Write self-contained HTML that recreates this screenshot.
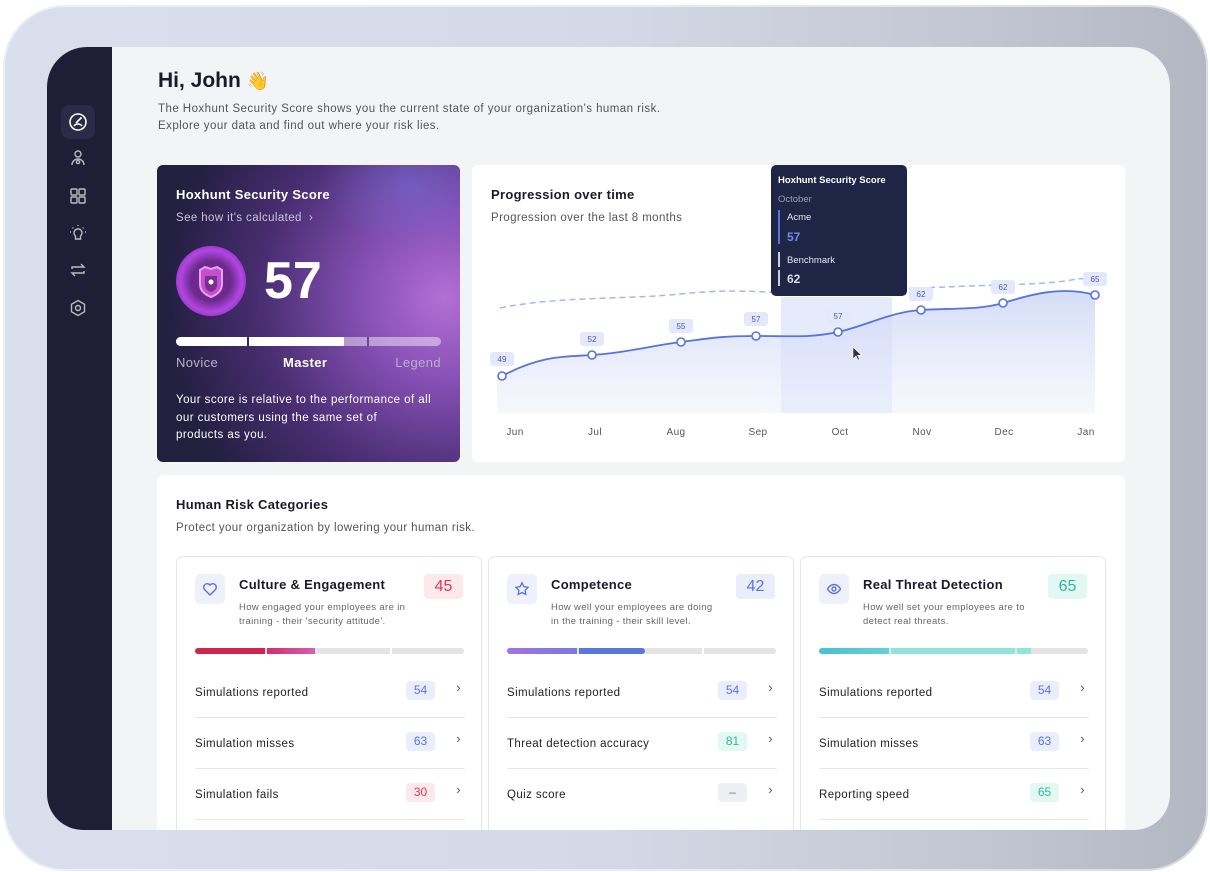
<!DOCTYPE html>
<html><head><meta charset="utf-8"><style>
*{box-sizing:border-box;margin:0;padding:0}
body{width:1210px;height:872px;background:#fff;position:relative;overflow:hidden;font-family:"Liberation Sans",sans-serif;color:#1a1a2b}
.frame{position:absolute;left:3px;top:5px;width:1205px;height:866px;border-radius:62px;background:linear-gradient(90deg,#d9dfec 0%,#d3d9e7 50%,#c3c7d1 80%,#b3b7c2 100%);box-shadow:inset 0 0 0 2px rgba(255,255,255,.5)}
.screen{position:absolute;left:47px;top:47px;width:1123px;height:783px;border-radius:40px 40px 36px 36px;background:#f3f4f6;overflow:hidden}
.side{position:absolute;left:0;top:0;width:65px;height:783px;background:#1f1e36}
.ic{position:absolute;left:14px;width:34px;height:34px;border-radius:8px;display:flex;align-items:center;justify-content:center}
.main{position:absolute;left:65px;top:0;right:0;bottom:0}
h1{position:absolute;left:46px;top:22px;font-size:21px;font-weight:bold}
.intro{position:absolute;left:46px;top:54px;font-size:11.5px;line-height:17px;color:#555;letter-spacing:.45px}
.card{position:absolute;background:#fff;border-radius:6px}
.score{left:45px;top:118px;width:303px;height:297px;border-radius:6px;background:radial-gradient(circle at 95% 45%,#b36fd4 0%,#8650b5 25%,#4a2e73 55%,#221f3f 85%);color:#fff;overflow:hidden}
.score:after{content:"";position:absolute;right:-40px;top:-40px;width:180px;height:120px;background:radial-gradient(ellipse,rgba(120,120,230,.45),transparent 70%)}
.t{font-weight:bold;font-size:13px;letter-spacing:.3px}
.sub{font-size:11.5px;color:#555;letter-spacing:.4px}
.pill{display:inline-block;border-radius:4px;text-align:center}
.sc{position:absolute;top:0;width:306px;height:300px;border:1px solid #e3e5ea;border-radius:7px;background:#fff}
.row{position:absolute;left:18px;width:270px;height:51px;border-bottom:1px solid #e6e7eb;font-size:11.5px;color:#222;letter-spacing:.4px}
.row span.l{position:absolute;left:0;top:20px}
.row .v{position:absolute;right:30px;top:14px;width:29px;height:19px;font-size:12px;line-height:19px;border-radius:4px;text-align:center;letter-spacing:0}
.row .a{position:absolute;right:4px;top:13px;font-size:13px;color:#555}
.desc{position:absolute;left:62px;top:44px;font-size:9.5px;line-height:14px;color:#666;letter-spacing:.35px}
</style></head><body>
<div class="frame"></div>
<div class="screen">
 <div class="side">
  <div class="ic" style="top:58px;background:#2b2a47"><svg width="20" height="20" viewBox="0 0 20 20" fill="none" stroke="#fff" stroke-width="1.6"><circle cx="10" cy="10" r="8"/><path d="M6 14a5 5 0 0 1 8 0M8 11l5-5M12 6h1v1"/></svg></div>
  <div class="ic" style="top:94px"><svg width="18" height="18" viewBox="0 0 18 18" fill="none" stroke="#bbb" stroke-width="1.4"><circle cx="9" cy="5" r="3"/><path d="M3 16a6 6 0 0 1 12 0"/><circle cx="9" cy="13" r="1.6"/></svg></div>
  <div class="ic" style="top:132px"><svg width="18" height="18" viewBox="0 0 18 18" fill="none" stroke="#bbb" stroke-width="1.4"><rect x="2" y="2" width="6" height="6" rx="1"/><rect x="10" y="2" width="6" height="6" rx="1"/><rect x="2" y="10" width="6" height="6" rx="1"/><rect x="10" y="10" width="6" height="6" rx="1"/></svg></div>
  <div class="ic" style="top:169px"><svg width="18" height="18" viewBox="0 0 18 18" fill="none" stroke="#bbb" stroke-width="1.4"><path d="M6.5 12a4 4 0 1 1 5 0v3h-5z M9 1v1M2 8H1M17 8h-1M3.5 3.5l.7.7M14.5 3.5l-.7.7"/></svg></div>
  <div class="ic" style="top:206px"><svg width="18" height="18" viewBox="0 0 18 18" fill="none" stroke="#bbb" stroke-width="1.4"><path d="M3 8V6h12l-3-3M15 10v2H3l3 3"/></svg></div>
  <div class="ic" style="top:244px"><svg width="18" height="18" viewBox="0 0 18 18" fill="none" stroke="#bbb" stroke-width="1.4"><path d="M9 1.5l6.5 3.75v7.5L9 16.5l-6.5-3.75v-7.5z"/><circle cx="9" cy="9" r="2.5"/></svg></div>
 </div>
 <div class="main">
  <h1>Hi, John <span style="font-size:18px">👋</span></h1>
  <div class="intro">The Hoxhunt Security Score shows you the current state of your organization's human risk.<br>Explore your data and find out where your risk lies.</div>

  <div class="card score">
   <div class="t" style="position:absolute;left:19px;top:22px;z-index:1">Hoxhunt Security Score</div>
   <div style="position:absolute;left:19px;top:47px;font-size:11.5px;color:#c9c4dc;z-index:1;letter-spacing:.4px">See how it's calculated &nbsp;›</div>
   <div style="position:absolute;left:19px;top:81px;width:70px;height:70px;border-radius:50%;background:radial-gradient(circle,#6b2a8c 40%,#b146e0 62%,#8d2fc0 80%);z-index:1"><svg width="70" height="70" viewBox="0 0 70 70"><path d="M24 24l5-3 6 2 6-2 5 3v14c0 7-6 11-11 13-5-2-11-6-11-13z" fill="#c54fcf" stroke="#e7a0ff" stroke-width="2"/><path d="M29 30h12v9c0 4-3 6-6 7-3-1-6-3-6-7z" fill="#7a2f8f"/><circle cx="35" cy="36" r="2.5" fill="#fff"/></svg></div>
   <div style="position:absolute;left:107px;top:86px;font-size:52px;font-weight:bold;z-index:1">57</div>
   <div style="position:absolute;left:19px;top:172px;width:265px;height:9px;border-radius:5px;background:rgba(255,255,255,.45);z-index:1"><div style="width:168px;height:9px;border-radius:5px 0 0 5px;background:#fff"></div><div style="position:absolute;left:71px;top:0;width:2px;height:9px;background:#3a2b58"></div><div style="position:absolute;left:191px;top:0;width:2px;height:9px;background:#6a4a8c"></div></div>
   <div style="position:absolute;left:19px;top:190px;width:265px;font-size:13px;z-index:1;color:#b7b2c9;letter-spacing:.4px"><span>Novice</span><span style="position:absolute;left:107px;color:#fff;font-weight:bold">Master</span><span style="position:absolute;right:0">Legend</span></div>
   <div style="position:absolute;left:19px;top:227px;width:280px;font-size:11.5px;line-height:17.5px;z-index:1;letter-spacing:.45px;white-space:nowrap">Your score is relative to the performance of all<br>our customers using the same set of<br>products as you.</div>
  </div>

  <div class="card" style="left:360px;top:118px;width:653px;height:297px">
   <div class="t" style="position:absolute;left:19px;top:22px">Progression over time</div>
   <div class="sub" style="position:absolute;left:19px;top:47px">Progression over the last 8 months</div>
  </div>
  <svg style="position:absolute;left:0;top:0" width="1058" height="420" viewBox="112 47 1058 420">
   <defs><linearGradient id="g" x1="0" y1="0" x2="0" y2="1"><stop offset="0" stop-color="#c9d3f5" stop-opacity=".8"/><stop offset="1" stop-color="#eef1fc" stop-opacity=".5"/></linearGradient></defs>
   <rect x="781" y="297" width="111" height="116" fill="#e6ebfb"/>
   <path d="M502 376C540 356 560 357 592 355S650 346 681 342 720 336 756 336 810 338 838 332 890 312 921 310 980 310 1003 303 1060 285 1095 295V413H497V376Z" fill="url(#g)"/>
   <path d="M500 308C560 296 620 300 680 294S760 293 800 293 900 288 1000 285 1060 276 1095 280" fill="none" stroke="#a9b6e8" stroke-width="1.5" stroke-dasharray="6 4"/>
   <path d="M502 376C540 356 560 357 592 355S650 346 681 342 720 336 756 336 810 338 838 332 890 312 921 310 980 310 1003 303 1060 285 1095 295" fill="none" stroke="#5774dc" stroke-width="1.8"/>
   <g fill="#fff" stroke="#5774dc" stroke-width="1.6">
    <circle cx="502" cy="376" r="4"/><circle cx="592" cy="355" r="4"/><circle cx="681" cy="342" r="4"/><circle cx="756" cy="336" r="4"/><circle cx="838" cy="332" r="4"/><circle cx="921" cy="310" r="4"/><circle cx="1003" cy="303" r="4"/><circle cx="1095" cy="295" r="4"/>
   </g>
   <g font-family="Liberation Sans" font-size="8" fill="#4a5aa8" text-anchor="middle">
    <rect x="490" y="352" width="24" height="14" rx="3" fill="#e3e8fa"/><text x="502" y="362">49</text>
    <rect x="580" y="332" width="24" height="14" rx="3" fill="#e3e8fa"/><text x="592" y="342">52</text>
    <rect x="669" y="319" width="24" height="14" rx="3" fill="#e3e8fa"/><text x="681" y="329">55</text>
    <rect x="744" y="312" width="24" height="14" rx="3" fill="#e3e8fa"/><text x="756" y="322">57</text>
    <rect x="826" y="309" width="24" height="14" rx="3" fill="#e3e8fa"/><text x="838" y="319">57</text>
    <rect x="909" y="287" width="24" height="14" rx="3" fill="#e3e8fa"/><text x="921" y="297">62</text>
    <rect x="991" y="280" width="24" height="14" rx="3" fill="#e3e8fa"/><text x="1003" y="290">62</text>
    <rect x="1083" y="272" width="24" height="14" rx="3" fill="#e3e8fa"/><text x="1095" y="282">65</text>
   </g>
   <g font-family="Liberation Sans" font-size="10" fill="#555" text-anchor="middle" letter-spacing=".4">
    <text x="515" y="435">Jun</text><text x="595" y="435">Jul</text><text x="676" y="435">Aug</text><text x="758" y="435">Sep</text><text x="840" y="435">Oct</text><text x="922" y="435">Nov</text><text x="1004" y="435">Dec</text><text x="1086" y="435">Jan</text>
   </g>
   <path d="M853 347l0 12 3-3 2 4 1.5-.7-2-4 4 0z" fill="#333" stroke="#fff" stroke-width=".6"/>
   <rect x="771" y="165" width="136" height="131" rx="5" fill="#1f2544"/>
   <g font-family="Liberation Sans">
    <text x="778" y="183" font-size="9.5" font-weight="bold" fill="#fff">Hoxhunt Security Score</text>
    <text x="778" y="202" font-size="9.5" fill="#9aa0b8">October</text>
    <rect x="778" y="210" width="2" height="34" fill="#5774dc"/>
    <text x="787" y="220" font-size="9.5" fill="#e6e8f0">Acme</text>
    <text x="787" y="241" font-size="12" font-weight="bold" fill="#6f8cf0">57</text>
    <rect x="778" y="252" width="2" height="15" fill="#c9cde6"/><rect x="778" y="270" width="2" height="16" fill="#c9cde6"/>
    <text x="787" y="263" font-size="9.5" fill="#e6e8f0">Benchmark</text>
    <text x="787" y="283" font-size="12" font-weight="bold" fill="#d9dcf0">62</text>
   </g>
  </svg>

  <div class="card" style="left:45px;top:428px;width:968px;height:400px">
   <div class="t" style="position:absolute;left:19px;top:22px">Human Risk Categories</div>
   <div class="sub" style="position:absolute;left:19px;top:47px">Protect your organization by lowering your human risk.</div>
   <div class="sc" style="left:19px;top:81px">
    <div style="position:absolute;left:18px;top:17px;width:30px;height:30px;border-radius:5px;background:#eef1fc;display:flex;align-items:center;justify-content:center"><svg width="16" height="16" viewBox="0 0 16 16" fill="none" stroke="#5774dc" stroke-width="1.4"><path d="M8 14L2.5 8.5A3.2 3.2 0 0 1 8 4a3.2 3.2 0 0 1 5.5 4.5z"/></svg></div>
    <div class="t" style="position:absolute;left:62px;top:20px">Culture &amp; Engagement</div>
    <div class="desc">How engaged your employees are in<br>training - their 'security attitude'.</div>
    <div class="pill" style="position:absolute;left:247px;top:17px;width:39px;height:25px;background:#fde8ec;color:#e0365f;font-size:16px;line-height:25px">45</div>
    <div style="position:absolute;left:18px;top:91px;width:269px;height:6px;border-radius:3px;background:#e4e4e6;overflow:hidden"><div style="position:absolute;left:0;width:70px;height:6px;background:#d3234f"></div><div style="position:absolute;left:72px;width:48px;height:6px;background:linear-gradient(90deg,#d3306a,#d55fb5)"></div><div style="position:absolute;left:195px;width:2px;height:6px;background:#fff"></div></div>
    <div class="row" style="top:110px"><span class="l">Simulations reported</span><span class="v" style="background:#eaeefc;color:#5774dc">54</span><span class="a">›</span></div>
    <div class="row" style="top:161px"><span class="l">Simulation misses</span><span class="v" style="background:#eaeefc;color:#5774dc">63</span><span class="a">›</span></div>
    <div class="row" style="top:212px"><span class="l">Simulation fails</span><span class="v" style="background:#fde8ec;color:#e0365f">30</span><span class="a">›</span></div>
   </div>
   <div class="sc" style="left:331px;top:81px">
    <div style="position:absolute;left:18px;top:17px;width:30px;height:30px;border-radius:5px;background:#eef1fc;display:flex;align-items:center;justify-content:center"><svg width="16" height="16" viewBox="0 0 16 16" fill="none" stroke="#5774dc" stroke-width="1.3"><path d="M8 1.8l1.9 3.9 4.2.6-3 3 .7 4.2L8 11.5l-3.8 2 .7-4.2-3-3 4.2-.6z"/></svg></div>
    <div class="t" style="position:absolute;left:62px;top:20px">Competence</div>
    <div class="desc">How well your employees are doing<br>in the training - their skill level.</div>
    <div class="pill" style="position:absolute;left:247px;top:17px;width:39px;height:25px;background:#eaeefc;color:#5774dc;font-size:16px;line-height:25px">42</div>
    <div style="position:absolute;left:18px;top:91px;width:269px;height:6px;border-radius:3px;background:#e4e4e6;overflow:hidden"><div style="position:absolute;left:0;width:70px;height:6px;background:linear-gradient(90deg,#a273e0,#7b78e3)"></div><div style="position:absolute;left:72px;width:66px;height:6px;border-radius:0 3px 3px 0;background:#5a77e0"></div><div style="position:absolute;left:195px;width:2px;height:6px;background:#fff"></div></div>
    <div class="row" style="top:110px"><span class="l">Simulations reported</span><span class="v" style="background:#eaeefc;color:#5774dc">54</span><span class="a">›</span></div>
    <div class="row" style="top:161px"><span class="l">Threat detection accuracy</span><span class="v" style="background:#e4f8f3;color:#2bb99a">81</span><span class="a">›</span></div>
    <div class="row" style="top:212px;border:0"><span class="l">Quiz score</span><span class="v" style="background:#eeeff2;color:#777">–</span><span class="a">›</span></div>
   </div>
   <div class="sc" style="left:643px;top:81px">
    <div style="position:absolute;left:18px;top:17px;width:30px;height:30px;border-radius:5px;background:#eef1fc;display:flex;align-items:center;justify-content:center"><svg width="16" height="16" viewBox="0 0 16 16" fill="none" stroke="#5774dc" stroke-width="1.4"><path d="M1.5 8s2.5-4.5 6.5-4.5S14.5 8 14.5 8 12 12.5 8 12.5 1.5 8 1.5 8z"/><circle cx="8" cy="8" r="2"/></svg></div>
    <div class="t" style="position:absolute;left:62px;top:20px">Real Threat Detection</div>
    <div class="desc">How well set your employees are to<br>detect real threats.</div>
    <div class="pill" style="position:absolute;left:247px;top:17px;width:39px;height:25px;background:#e4f8f3;color:#2bb99a;font-size:16px;line-height:25px">65</div>
    <div style="position:absolute;left:18px;top:91px;width:269px;height:6px;border-radius:3px;background:#e4e4e6;overflow:hidden"><div style="position:absolute;left:0;width:70px;height:6px;background:linear-gradient(90deg,#4cc0cf,#62d0d6)"></div><div style="position:absolute;left:72px;width:124px;height:6px;background:#8fe6d8"></div><div style="position:absolute;left:198px;width:14px;height:6px;background:#8fe6d8"></div></div>
    <div class="row" style="top:110px"><span class="l">Simulations reported</span><span class="v" style="background:#eaeefc;color:#5774dc">54</span><span class="a">›</span></div>
    <div class="row" style="top:161px"><span class="l">Simulation misses</span><span class="v" style="background:#eaeefc;color:#5774dc">63</span><span class="a">›</span></div>
    <div class="row" style="top:212px"><span class="l">Reporting speed</span><span class="v" style="background:#e4f8f3;color:#2bb99a">65</span><span class="a">›</span></div>
   </div>
  </div>
 </div>
</div>
</body></html>
